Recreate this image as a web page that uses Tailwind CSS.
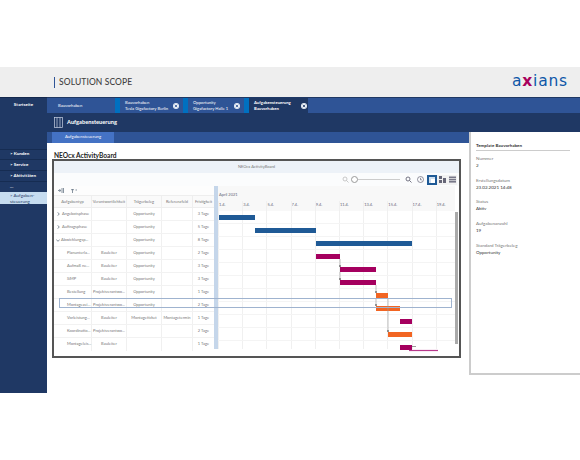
<!DOCTYPE html>
<html lang="de">
<head>
    <meta charset="UTF-8" />
    <title>Solution Scope</title>
    <script src="https://cdn.jsdelivr.net/npm/@tailwindcss/browser@4"></script>
</head>
<body class="bg-white pt-[67px] h-[460px] overflow-hidden font-[Lato,sans-serif]">
    <!-- Header -->
    <div class="h-[30px] bg-[#eeeeee] flex items-center justify-between pl-[54px] pr-[12px]">
        <div class="flex items-center gap-[4px]">
            <div class="w-[1px] h-[11px] bg-[#2f5496]"></div>
            <span class="text-[8.5px] tracking-[0.1px] text-[#444] font-[500]">SOLUTION SCOPE</span>
        </div>
        <div class="flex items-center text-[15.5px] leading-none tracking-[0.8px] text-[#0d57a8] font-['DejaVu_Sans',sans-serif]">
            <span>a</span><span class="text-[#a8005c] font-bold">x</span><span>ians</span>
        </div>
    </div>

    <div class="flex h-[296px]">
        <!-- Sidebar -->
        <div class="w-[47px] shrink-0 bg-[#1f3864] text-white text-[4.5px] font-bold">
            <div class="h-[16px] flex items-center justify-center border-t border-[#14284d]">Startseite</div>
            <div class="h-[36px]"></div>
            <div class="h-[11px] flex items-center pl-[10px] border-y border-[#162c52]">&gt; Kunden</div>
            <div class="h-[11px] flex items-center pl-[10px] border-b border-[#162c52]">&gt; Service</div>
            <div class="h-[11px] flex items-center pl-[10px] border-b border-[#162c52]">&gt; Aktivitäten</div>
            <div class="h-[10px] flex items-end pl-[10px] pb-[1px]">...</div>
            <div class="h-[12px] bg-[#c6dcf0] text-[#1f3864] pl-[10px] pt-[1px] leading-[5.5px] font-normal">&gt; Aufgaben-<br>steuerung</div>
        </div>

        <div class="w-[533px] flex flex-col">
            <!-- Tabs -->
            <div class="h-[16px] bg-[#2f5496] flex text-white text-[4.2px] leading-[5.5px] border-t border-[#1f3864]">
                <div class="w-[68px] pl-[11px] flex items-center">Bauvorhaben</div>
                <div class="w-[68px] flex items-center justify-between border-l-[5px] border-[#0070c0] pl-[5px] pr-[4px]">
                    <div>Bauvorhaben<br>Tesla Gigafactory Berlin</div>
                    <svg width="6" height="6" viewBox="0 0 6 6"><circle cx="3" cy="3" r="3" fill="#e8eef6"/><path d="M1.8 1.8l2.4 2.4M4.2 1.8L1.8 4.2" stroke="#2f5496" stroke-width="0.8"/></svg>
                </div>
                <div class="w-[61px] flex items-center justify-between border-l-[5px] border-[#0070c0] pl-[5px] pr-[4px]">
                    <div>Opportunity<br>Gigafactory Halle 1</div>
                    <svg width="6" height="6" viewBox="0 0 6 6"><circle cx="3" cy="3" r="3" fill="#e8eef6"/><path d="M1.8 1.8l2.4 2.4M4.2 1.8L1.8 4.2" stroke="#2f5496" stroke-width="0.8"/></svg>
                </div>
                <div class="w-[64px] flex items-center justify-between bg-[#1f3864] border-l-[5px] border-[#0070c0] pl-[5px] pr-[1px] font-bold">
                    <div>Aufgabensteuerung<br>Bauvorhaben</div>
                    <svg width="6" height="6" viewBox="0 0 6 6"><circle cx="3" cy="3" r="3" fill="#e8eef6"/><path d="M1.8 1.8l2.4 2.4M4.2 1.8L1.8 4.2" stroke="#1f3864" stroke-width="0.8"/></svg>
                </div>
            </div>

            <!-- Page title -->
            <div class="h-[19px] bg-[#1f3864] flex items-center pl-[7px] gap-[4px] text-white text-[5.7px] font-bold">
                <svg width="9" height="11" viewBox="0 0 9 11" fill="none" stroke="#c9d3e4" stroke-width="0.7"><rect x="0.5" y="0.5" width="8" height="10"/><path d="M3 .5v10M6 .5v10"/></svg>
                Aufgabensteuerung
            </div>

            <div class="flex flex-1 min-h-0">
                <div class="w-[422px]">
                    <div class="h-[11px] bg-[#2f5496] pl-[5px]">
                        <div class="w-[62px] h-full bg-[#4472c4] text-white text-[4.2px] flex items-center justify-center">Aufgabensteuerung</div>
                    </div>
                    <div class="pl-[7px] pt-[8px] text-[6.6px] leading-[8px] font-bold text-[#222]">NEOcx ActivityBoard</div>

                    <!-- ActivityBoard window -->
                    <div class="relative ml-[5px] w-[409px] h-[199px] border-2 border-[#555] bg-white text-[#777] text-[4px]">
                        <div class="h-[12px] bg-[#edf2f8] flex items-center justify-center">NEOcx ActivityBoard</div>
                        <div class="h-[13px] bg-[#fbfcfd] flex items-center justify-end pr-[2px]">
                            <svg width="7" height="7" viewBox="0 0 7 7" fill="none" stroke="#bbb" stroke-width="0.8"><circle cx="3" cy="3" r="2"/><path d="M4.5 4.5L6.5 6.5"/></svg>
                            <div class="w-[7px] h-[7px] ml-[2px] rounded-full border border-[#999] bg-white"></div>
                            <div class="w-[42px] h-[1px] bg-[#ccc]"></div>
                            <svg class="ml-[5px]" width="7" height="7" viewBox="0 0 7 7" fill="none" stroke="#667" stroke-width="0.9"><circle cx="3" cy="3" r="2"/><path d="M4.5 4.5L6.5 6.5"/></svg>
                            <svg class="ml-[5px]" width="7" height="7" viewBox="0 0 7 7" fill="none" stroke="#667" stroke-width="0.7"><circle cx="3.5" cy="3.5" r="3"/><path d="M3.5 1.8v2h1.4"/></svg>
                            <div class="ml-[3px] w-[10px] h-[10px] bg-[#1f5a96] flex items-center justify-center"><div class="w-[6px] h-[6px] bg-white border-l-2 border-t-2 border-[#cfe0f0]"></div></div>
                            <div class="w-[10px] h-[10px] bg-[#f2f2f2] flex items-center justify-center">
                                <svg width="7" height="7" viewBox="0 0 7 7" fill="#667"><rect x="0" y="0" width="3" height="3"/><rect x="0" y="4" width="3" height="3"/><rect x="4" y="2" width="3" height="5"/></svg>
                            </div>
                            <div class="w-[10px] h-[10px] bg-[#f2f2f2] flex items-center justify-center">
                                <svg width="7" height="7" viewBox="0 0 7 7" fill="#778"><rect y="0.5" width="7" height="1.6"/><rect y="2.8" width="7" height="1.6"/><rect y="5" width="7" height="1.6"/></svg>
                            </div>
                        </div>

                        <div class="flex">
                            <!-- Table -->
                            <div class="w-[160px] shrink-0">
                                <div class="h-[9px] flex items-center gap-[7px] pl-[4px] bg-[#fdfdfd]">
                                    <svg width="6" height="5" viewBox="0 0 6 5" fill="none" stroke="#567" stroke-width="0.7"><path d="M0 2.5h2.5M1.5 1l1 1.5-1 1.5M4 0v5M5.5 0v5"/></svg>
                                    <svg width="6" height="4" viewBox="0 0 6 4" fill="none" stroke="#567" stroke-width="0.7"><path d="M1.5 0v4M0 1l1.5-1 1.5 1M4.5 1h1.5"/></svg>
                                </div>
                                <div class="grid grid-cols-[38px_35px_35px_31px_21px] h-[13px] bg-[#fafafa] border-y border-[#eee] text-center items-stretch">
                                    <div class="flex items-center justify-center border-r border-[#eee]">Aufgabentyp</div>
                                    <div class="flex items-center justify-center border-r border-[#eee]">Verantwortlichkeit</div>
                                    <div class="flex items-center justify-center border-r border-[#eee]">Trägerbeleg</div>
                                    <div class="flex items-center justify-center border-r border-[#eee]">Referenzfeld</div>
                                    <div class="flex items-center justify-center">Fristigkeit</div>
                                </div>
                                <div class="text-center">
                                    <div class="grid grid-cols-[38px_35px_35px_31px_21px] h-[13px] leading-[12px] border-b border-[#f2f2f2]">
                                        <div class="flex items-center pl-[3px] gap-[2px] border-r border-[#f0f0f0]"><svg width="3" height="4" viewBox="0 0 3 4" fill="none" stroke="#345" stroke-width="0.6"><path d="M.5.3L2.3 2 .5 3.7"/></svg>Angebotsphase</div>
                                        <div class="border-r border-[#f0f0f0]"></div><div class="border-r border-[#f0f0f0]">Opportunity</div><div class="border-r border-[#f0f0f0]"></div><div>3 Tage</div>
                                    </div>
                                    <div class="grid grid-cols-[38px_35px_35px_31px_21px] h-[13px] leading-[12px] border-b border-[#f2f2f2]">
                                        <div class="flex items-center pl-[3px] gap-[2px] border-r border-[#f0f0f0]"><svg width="3" height="4" viewBox="0 0 3 4" fill="none" stroke="#345" stroke-width="0.6"><path d="M.5.3L2.3 2 .5 3.7"/></svg>Auftragsphase</div>
                                        <div class="border-r border-[#f0f0f0]"></div><div class="border-r border-[#f0f0f0]">Opportunity</div><div class="border-r border-[#f0f0f0]"></div><div>5 Tage</div>
                                    </div>
                                    <div class="grid grid-cols-[38px_35px_35px_31px_21px] h-[13px] leading-[12px] border-b border-[#f2f2f2]">
                                        <div class="flex items-center pl-[2px] gap-[1px] border-r border-[#f0f0f0]"><svg width="4" height="3" viewBox="0 0 4 3" fill="none" stroke="#345" stroke-width="0.6"><path d="M.3.5L2 2.3 3.7.5"/></svg>Abwicklungsp...</div>
                                        <div class="border-r border-[#f0f0f0]"></div><div class="border-r border-[#f0f0f0]">Opportunity</div><div class="border-r border-[#f0f0f0]"></div><div>8 Tage</div>
                                    </div>
                                    <div class="grid grid-cols-[38px_35px_35px_31px_21px] h-[13px] leading-[12px] border-b border-[#f2f2f2]">
                                        <div class="pl-[13px] text-left border-r border-[#f0f0f0]">Planunterla...</div>
                                        <div class="border-r border-[#f0f0f0]">Bauleiter</div><div class="border-r border-[#f0f0f0]">Opportunity</div><div class="border-r border-[#f0f0f0]"></div><div>2 Tage</div>
                                    </div>
                                    <div class="grid grid-cols-[38px_35px_35px_31px_21px] h-[13px] leading-[12px] border-b border-[#f2f2f2]">
                                        <div class="pl-[13px] text-left border-r border-[#f0f0f0]">Aufmaß ne...</div>
                                        <div class="border-r border-[#f0f0f0]">Bauleiter</div><div class="border-r border-[#f0f0f0]">Opportunity</div><div class="border-r border-[#f0f0f0]"></div><div>3 Tage</div>
                                    </div>
                                    <div class="grid grid-cols-[38px_35px_35px_31px_21px] h-[13px] leading-[12px] border-b border-[#f2f2f2]">
                                        <div class="pl-[13px] text-left border-r border-[#f0f0f0]">SiMP</div>
                                        <div class="border-r border-[#f0f0f0]">Bauleiter</div><div class="border-r border-[#f0f0f0]">Opportunity</div><div class="border-r border-[#f0f0f0]"></div><div>3 Tage</div>
                                    </div>
                                    <div class="grid grid-cols-[38px_35px_35px_31px_21px] h-[13px] leading-[12px] border-b border-[#f2f2f2]">
                                        <div class="pl-[13px] text-left border-r border-[#f0f0f0]">Bestellung</div>
                                        <div class="border-r border-[#f0f0f0]">Projektverantwo...</div><div class="border-r border-[#f0f0f0]">Opportunity</div><div class="border-r border-[#f0f0f0]"></div><div>1 Tage</div>
                                    </div>
                                    <div class="grid grid-cols-[38px_35px_35px_31px_21px] h-[13px] leading-[12px] border-b border-[#f2f2f2]">
                                        <div class="pl-[13px] text-left border-r border-[#f0f0f0]">Montagezei...</div>
                                        <div class="border-r border-[#f0f0f0]">Projektverantwo...</div><div class="border-r border-[#f0f0f0]">Opportunity</div><div class="border-r border-[#f0f0f0]"></div><div>2 Tage</div>
                                    </div>
                                    <div class="grid grid-cols-[38px_35px_35px_31px_21px] h-[13px] leading-[12px] border-b border-[#f2f2f2]">
                                        <div class="pl-[13px] text-left border-r border-[#f0f0f0]">Vorleistung...</div>
                                        <div class="border-r border-[#f0f0f0]">Bauleiter</div><div class="border-r border-[#f0f0f0]">Montageticket</div><div class="border-r border-[#f0f0f0]">Montagetermin</div><div>1 Tage</div>
                                    </div>
                                    <div class="grid grid-cols-[38px_35px_35px_31px_21px] h-[13px] leading-[12px] border-b border-[#f2f2f2]">
                                        <div class="pl-[13px] text-left border-r border-[#f0f0f0]">Koordinatio...</div>
                                        <div class="border-r border-[#f0f0f0]">Projektverantwo...</div><div class="border-r border-[#f0f0f0]"></div><div class="border-r border-[#f0f0f0]"></div><div>2 Tage</div>
                                    </div>
                                    <div class="grid grid-cols-[38px_35px_35px_31px_21px] h-[13px] leading-[12px]">
                                        <div class="pl-[13px] text-left border-r border-[#f0f0f0]">Montageleis...</div>
                                        <div class="border-r border-[#f0f0f0]">Bauleiter</div><div class="border-r border-[#f0f0f0]"></div><div class="border-r border-[#f0f0f0]"></div><div>1 Tage</div>
                                    </div>
                                </div>
                            </div>

                            <!-- Splitter -->
                            <div class="w-[4px] h-[163px] shrink-0 bg-[#c5d6ea]"></div>

                            <!-- Chart -->
                            <div class="relative w-[237px]">
                                <div class="h-[25px] bg-[#f8f8f8] text-[#667] pl-[1px] flex flex-col">
                                    <div class="h-[12px] flex items-end">April 2021</div>
                                    <div class="grid grid-cols-[repeat(10,24.2px)] h-[13px] items-center">
                                        <span>1.4.</span><span>3.4.</span><span>5.4.</span><span>7.4.</span><span>9.4.</span><span>11.4.</span><span>13.4.</span><span>15.4.</span><span>17.4.</span><span>19.4.</span>
                                    </div>
                                </div>
                                <!-- grid lines -->
                                <div class="absolute left-0 top-[15px] h-[148px] w-[237px] grid grid-cols-[repeat(10,24.2px)] pointer-events-none">
                                    <div class="border-l border-[#f0f0f0]"></div><div class="border-l border-[#f0f0f0]"></div><div class="border-l border-[#f0f0f0]"></div><div class="border-l border-[#f0f0f0]"></div><div class="border-l border-[#f0f0f0]"></div><div class="border-l border-[#f0f0f0]"></div><div class="border-l border-[#f0f0f0]"></div><div class="border-l border-[#f0f0f0]"></div><div class="border-l border-[#f0f0f0]"></div><div class="border-l border-[#f0f0f0]"></div>
                                </div>
                                <!-- bars -->
                                <div class="relative">
                                    <div class="h-[13px] flex items-center border-b border-[#f4f4f4]"><div class="h-[5px] w-[36px] ml-[1px] bg-[#1f5a96]"></div></div>
                                    <div class="h-[13px] flex items-center border-b border-[#f4f4f4]"><div class="h-[5px] w-[61px] ml-[37px] bg-[#1f5a96]"></div></div>
                                    <div class="h-[13px] flex items-center border-b border-[#f4f4f4]"><div class="h-[5px] w-[96px] ml-[98px] bg-[#1f5a96]"></div></div>
                                    <div class="h-[13px] flex items-center border-b border-[#f4f4f4]"><div class="h-[5px] w-[24px] ml-[98px] bg-[#a5005f]"></div></div>
                                    <div class="h-[13px] flex items-center border-b border-[#f4f4f4]"><div class="h-[5px] w-[36px] ml-[122px] bg-[#a5005f]"></div></div>
                                    <div class="h-[13px] flex items-center border-b border-[#f4f4f4]"><div class="h-[5px] w-[36px] ml-[122px] bg-[#a5005f]"></div></div>
                                    <div class="h-[13px] flex items-center border-b border-[#f4f4f4]"><div class="h-[5px] w-[12px] ml-[158px] bg-[#f26522]"></div></div>
                                    <div class="h-[13px] flex items-center border-b border-[#f4f4f4]"><div class="h-[5px] w-[24px] ml-[158px] bg-[#f26522]"></div></div>
                                    <div class="h-[13px] flex items-center border-b border-[#f4f4f4]"><div class="h-[5px] w-[12px] ml-[182px] bg-[#a5005f]"></div></div>
                                    <div class="h-[13px] flex items-center border-b border-[#f4f4f4]"><div class="h-[5px] w-[24px] ml-[170px] bg-[#f26522]"></div></div>
                                    <div class="h-[12px] flex items-center"><div class="h-[5px] w-[12px] ml-[182px] bg-[#a5005f]"></div></div>
                                    <!-- links between bars -->
                                    <svg class="absolute left-0 top-0" width="237" height="142" viewBox="0 0 237 142" fill="none" stroke="#999" stroke-width="0.6">
                                        <path d="M122 48v8M122 61v8M158 74v8M158 87v8M170 87v34"/>
                                        <path d="M121 55h2M121 68h2M157 81h2M157 94h2M169 120h2" stroke="#444" stroke-width="1"/>
                                        <path d="M194 135.5h4" stroke="#555"/>
                                        <path d="M191 139.5h29" stroke="#b83a8c" stroke-width="1.2"/>
                                    </svg>
                                </div>
                            </div>

                            <!-- Scrollbar -->
                            <div class="absolute right-[1px] top-[51px] w-[3px] h-[132px] bg-[#aaa]"></div>
                        </div>

                        <!-- selected row -->
                        <div class="absolute left-[5px] top-[137px] w-[393px] h-[10px] border border-[#9fb3cf]"></div>
                    </div>
                </div>

                <!-- Info panel -->
                <div class="w-[111px] h-[243px] border-l-2 border-b-2 border-[#cccccc] bg-white pl-[5px] pr-[10px] pt-[11px] text-[4.5px] leading-[6px] text-[#777]">
                    <div class="font-bold text-[#333] pb-[1px] border-b border-[#ccc]">Template Bauvorhaben</div>
                    <div class="mt-[5px]">Nummer</div>
                    <div class="mt-[1px] text-[#333]">2</div>
                    <div class="mt-[8.7px]">Erstellungsdatum</div>
                    <div class="mt-[1px] text-[#333]">23.02.2021 14:48</div>
                    <div class="mt-[8.7px]">Status</div>
                    <div class="mt-[1px] text-[#333]">Aktiv</div>
                    <div class="mt-[8.7px]">Aufgabenanzahl</div>
                    <div class="mt-[1px] text-[#333]">19</div>
                    <div class="mt-[8.7px]">Standard Trägerbeleg</div>
                    <div class="mt-[1px] text-[#333]">Opportunity</div>
                </div>
            </div>
        </div>
    </div>
</body>
</html>
